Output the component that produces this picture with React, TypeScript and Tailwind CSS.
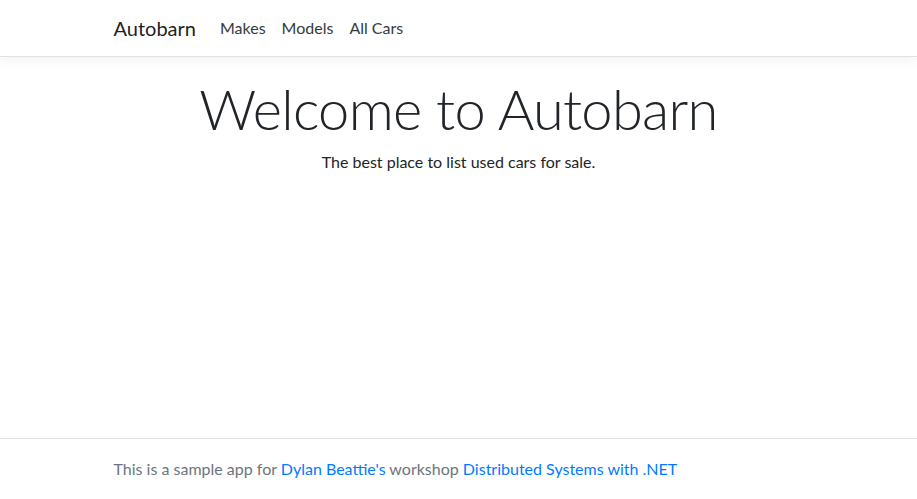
export default function App() {
  return (
    <div
      className="min-h-screen flex flex-col bg-white text-[#212529] text-[16px] leading-6"
      style={{ fontFamily: 'Lato, "Open Sans", sans-serif' }}
    >
      <header className="bg-white border-b border-[#dee2e6] shadow-[0_4px_12px_rgba(0,0,0,0.05)] mb-4">
        <nav className="w-[720px] mx-auto px-[15px] py-2 flex items-center">
          <a className="text-[20px] leading-[30px] py-[5px] mr-4 text-[rgba(0,0,0,0.9)]">Autobarn</a>
          <ul className="flex">
            <li><a className="block px-2 py-2 text-[#343a40]">Makes</a></li>
            <li><a className="block px-2 py-2 text-[#343a40]">Models</a></li>
            <li><a className="block px-2 py-2 text-[#343a40]">All Cars</a></li>
          </ul>
        </nav>
      </header>
      <main className="w-[720px] mx-auto px-[15px] pt-[2px] text-center">
        <h1 className="text-[56px] font-light leading-[1.2] tracking-[-0.7px] mb-2">Welcome to Autobarn</h1>
        <p>The best place to list used cars for sale.</p>
      </main>
      <footer className="mt-auto border-t border-[#dee2e6] leading-[60px] text-[#6c757d]">
        <div className="w-[720px] mx-auto px-[15px] whitespace-nowrap">
          This is a sample app for <a className="text-[#007bff]">Dylan Beattie's</a> workshop{' '}
          <a className="text-[#007bff]">Distributed Systems with .NET</a>
        </div>
      </footer>
    </div>
  );
}
